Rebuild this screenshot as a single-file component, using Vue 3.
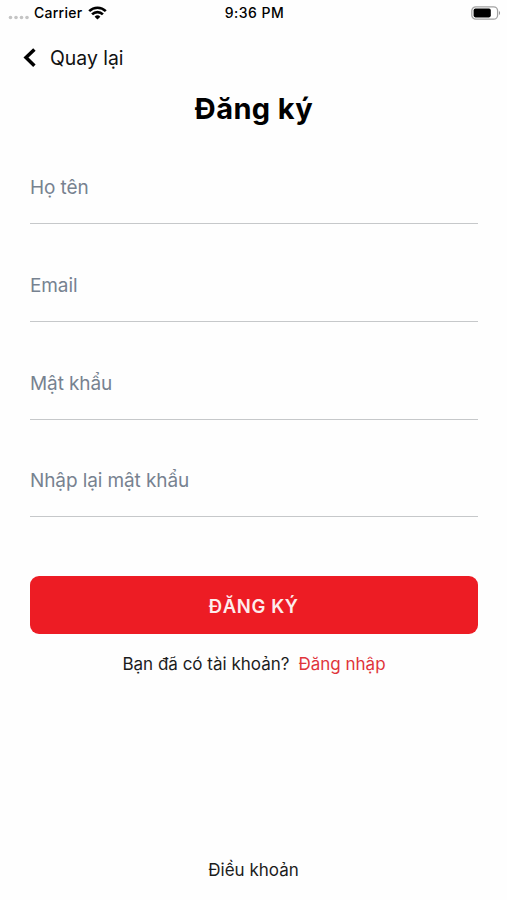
<template>
  <div class="screen">
    <div class="status-bar">
      <div class="status-left">
        <svg class="signal" width="22" height="5" viewBox="0 0 22 5">
          <circle v-for="n in 4" :key="n" :cx="n * 5.5 - 3" cy="2.5" r="1.8" />
        </svg>
        <span class="carrier">Carrier</span>
        <svg class="wifi" width="19" height="14" viewBox="0 0 19 14">
          <path d="M1.2 5.2 A11.8 11.8 0 0 1 17.8 5.2" />
          <path d="M4.1 8.4 A7.6 7.6 0 0 1 14.9 8.4" />
          <path class="wifi-dot" d="M9.5 13.6 L6.6 10.8 A4.1 4.1 0 0 1 12.4 10.8 Z" />
        </svg>
      </div>
      <span class="clock">9:36 PM</span>
      <div class="status-right">
        <svg width="30" height="14" viewBox="0 0 30 14">
          <rect x="0.8" y="0.8" width="25.8" height="12.4" rx="4" fill="#fff" stroke="#a3a3a3" stroke-width="1.3" />
          <rect x="2.6" y="2.6" width="17.2" height="8.8" rx="1.8" fill="#000" />
          <path d="M28 5 A2.4 2.4 0 0 1 28 9 Z" fill="#999" />
        </svg>
      </div>
    </div>

    <button class="back" type="button">
      <svg width="13" height="20" viewBox="0 0 13 20">
        <path d="M11.4 1.5 L3 9.6 L11.4 17.7" />
      </svg>
      <span class="back-text">Quay lại</span>
    </button>

    <h1>Đăng ký</h1>

    <form @submit.prevent>
      <label v-for="field in fields" :key="field.key" class="field">
        <span v-show="!form[field.key]" class="field-label">{{ field.label }}</span>
        <input v-model="form[field.key]" :type="field.type" />
      </label>
      <button class="submit" type="submit"><span class="submit-text">ĐĂNG KÝ</span></button>
    </form>

    <div class="login">
      <span class="question">Bạn đã có tài khoản?</span>
      <a class="login-link">Đăng nhập</a>
    </div>

    <div class="terms"><span class="terms-text">Điều khoản</span></div>
  </div>
</template>

<script setup>
import { reactive } from 'vue'

const fields = [
  { key: 'name', label: 'Họ tên', type: 'text' },
  { key: 'email', label: 'Email', type: 'email' },
  { key: 'password', label: 'Mật khẩu', type: 'password' },
  { key: 'confirm', label: 'Nhập lại mật khẩu', type: 'password' },
]

const form = reactive({ name: '', email: '', password: '', confirm: '' })
</script>

<style>
body {
  margin: 0;
  background: #fefefe;
}
</style>

<style scoped>
.screen {
  display: flex;
  flex-direction: column;
  height: 900px;
  box-sizing: border-box;
  background: #fefefe;
  color: #000;
  font-family: Inter, "Liberation Sans", sans-serif;
}

button {
  border: none;
  padding: 0;
  font-family: inherit;
  cursor: pointer;
}

.status-bar {
  display: grid;
  grid-template-columns: 1fr auto 1fr;
  align-items: center;
  height: 26px;
  padding: 0 6px 0 8px;
  font-size: 14px;
  font-weight: 500;
}
.status-left {
  display: flex;
  align-items: center;
}
.signal {
  margin: 8px 4px 0 0;
  fill: #c4c4c4;
}
.carrier {
  padding-bottom: 1px;
  letter-spacing: 0.25px;
}
.clock {
  padding-bottom: 1px;
  letter-spacing: 0.5px;
}
.wifi {
  margin-left: 6px;
  fill: none;
  stroke: #000;
  stroke-width: 2.6;
}
.wifi-dot {
  fill: #000;
  stroke: none;
}
.status-right {
  display: flex;
  justify-content: flex-end;
}

.back {
  display: flex;
  align-items: center;
  align-self: flex-start;
  height: 64px;
  padding-left: 23px;
  background: none;
  color: #111;
  font-size: 19.4px;
}
.back svg {
  margin-right: 14px;
  fill: none;
  stroke: #000;
  stroke-width: 3.5;
}

h1 {
  margin: 0;
  height: 38px;
  padding-left: 1px;
  line-height: 38px;
  text-align: center;
  font-size: 29px;
  font-weight: 700;
  letter-spacing: 0.4px;
}

form {
  padding: 0 29.5px 0 30px;
}
.field {
  position: relative;
  display: block;
  height: 97.75px;
  box-sizing: border-box;
  border-bottom: 1.4px solid #c6c8ca;
}
.field:first-child {
  height: 96px;
}
.field-label {
  position: absolute;
  left: 0;
  bottom: 22px;
  line-height: 26px;
  color: #778290;
  font-size: 19px;
  letter-spacing: -0.1px;
  pointer-events: none;
}
.field input {
  position: absolute;
  left: 0;
  bottom: 10px;
  width: 100%;
  height: 50px;
  padding: 0;
  border: none;
  outline: none;
  background: transparent;
  font: inherit;
  font-size: 19px;
}

.submit {
  display: block;
  width: 100%;
  height: 58px;
  margin-top: 59px;
  padding-top: 1px;
  border-radius: 9px;
  background: #ed1c24;
  color: #fdecec;
  font-size: 18.5px;
  font-weight: 600;
  letter-spacing: 0.6px;
}

.login {
  display: flex;
  justify-content: center;
  gap: 9px;
  margin-top: 18px;
  padding-left: 1px;
  line-height: 24px;
  font-size: 17px;
  color: #1c1c1c;
}
.login-link {
  color: #e0353b;
}

.terms {
  margin-top: auto;
  margin-bottom: 18px;
  line-height: 24px;
  text-align: center;
  color: #1c1c1c;
  font-size: 17px;
}
</style>
